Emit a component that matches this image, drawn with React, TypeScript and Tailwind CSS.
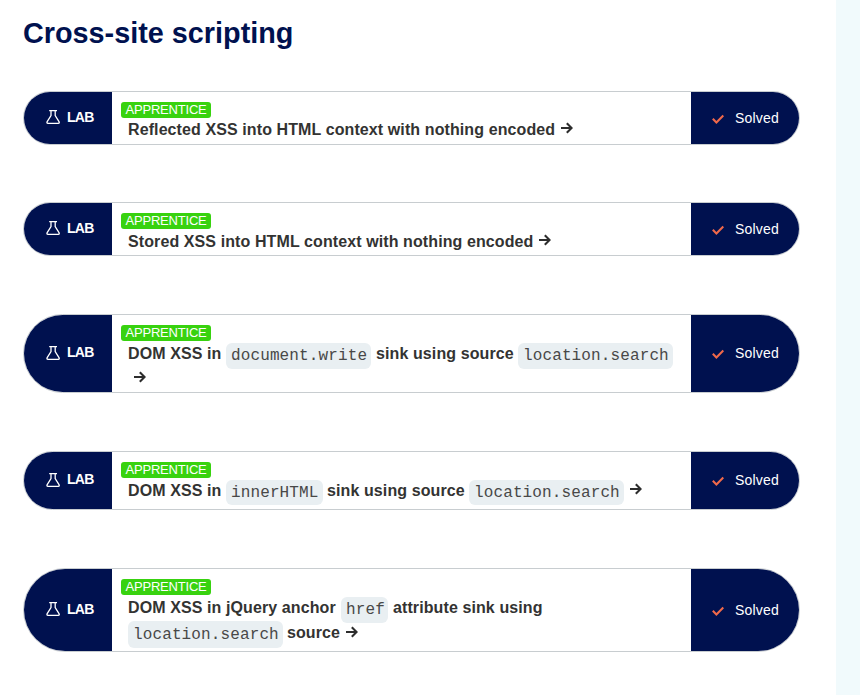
import React from "react";

function Arrow({ className }: { className: string }) {
  return (
    <svg className={"h-3 w-3 shrink-0 " + className} viewBox="0 0 12 12" fill="none" stroke="#2d2d2d" strokeWidth="2.1">
      <path d="M0 6H10.5M5.8 1.2L10.6 6L5.8 10.8" />
    </svg>
  );
}

function Flask() {
  return (
    <svg className="mt-px h-[14px] w-[14px] shrink-0" viewBox="0 0 14 14" fill="none" stroke="#fff" strokeWidth="1.3">
      <path d="M3.2 .7H11M5 .7V5.6L1.2 11.6Q.4 13.3 2 13.3H12.2Q13.8 13.3 13 11.6L9.2 5.6V.7" />
    </svg>
  );
}

function Check() {
  return (
    <svg className="mt-px h-[10px] w-3 shrink-0" viewBox="0 0 12 10" fill="none" stroke="#f0694a" strokeWidth="2.1">
      <path d="M.8 4.8L4.4 8.4L11.3 1.5" />
    </svg>
  );
}

function Code({ className, children }: { className: string; children: React.ReactNode }) {
  return (
    <code
      className={
        "block shrink-0 rounded-md bg-[#e9eff2] pl-[5px] font-['Liberation_Mono',monospace] text-base font-normal tracking-[0.12px] text-[#484848] " +
        className
      }
    >
      {children}
    </code>
  );
}

function Words({ className, children }: { className: string; children: React.ReactNode }) {
  return <span className={"block shrink-0 pt-px tracking-[0.1px] " + className}>{children}</span>;
}

function Line({ className = "", children }: { className?: string; children: React.ReactNode }) {
  return <div className={"flex items-start pl-4 leading-5 " + className}>{children}</div>;
}

function Lab({ className, children }: { className: string; children: React.ReactNode }) {
  return (
    <div className={"flex w-[777px] overflow-hidden rounded-[42px] border border-[#c8cdd0] bg-white " + className}>
      <div className="flex w-[88px] shrink-0 items-center bg-[#00114f] pb-[3px] pl-[22px] text-white">
        <Flask />
        <span className="ml-[7px] text-[14px] leading-5 font-bold tracking-[-0.7px]">LAB</span>
      </div>
      <div className="w-[579px] shrink-0 pt-[10px] text-base font-bold whitespace-nowrap text-[#333332]">
        <div className="ml-[9px] h-4 w-[90px] rounded-[3px] bg-[#38d20f] pl-[4.5px] text-[13px] leading-[15px] font-normal tracking-[-0.2px] text-white">
          APPRENTICE
        </div>
        {children}
      </div>
      <div className="flex w-[108px] shrink-0 items-center bg-[#00114f] pl-[21px] text-[14px] text-white">
        <Check />
        <span className="ml-[11px] tracking-[0.2px]">Solved</span>
      </div>
    </div>
  );
}

export default function App() {
  return (
    <div className="flex h-[695px] w-[860px] overflow-hidden bg-white font-['Liberation_Sans',Arial,sans-serif]">
      <main className="w-[836px] shrink-0 pl-[23px]">
        <h1 className="h-[91px] pt-[15px] text-[28.8px] leading-9 font-bold text-[#00114f]">Cross-site scripting</h1>
        <Lab className="h-[54px]">
          <Line className="mt-px">
            <Words className="w-[433px]">Reflected XSS into HTML context with nothing encoded</Words>
            <Arrow className="mt-[3px]" />
          </Line>
        </Lab>
        <Lab className="mt-[57px] h-[54px]">
          <Line className="mt-[2px]">
            <Words className="w-[411px]">Stored XSS into HTML context with nothing encoded</Words>
            <Arrow className="mt-[3px]" />
          </Line>
        </Lab>
        <Lab className="mt-[58px] h-[79px]">
          <Line className="mt-[2px] h-[26px]">
            <Words className="w-[98px]">DOM XSS in</Words>
            <Code className="w-[145px] leading-[26px]">document.write</Code>
            <Words className="ml-[5px] w-[142px]">sink using source</Words>
            <Code className="w-[155px] leading-[26px]">location.search</Code>
          </Line>
          <Line className="h-3">
            <Arrow className="mt-[2px] ml-[6px]" />
          </Line>
        </Lab>
        <Lab className="mt-[58px] h-[59px]">
          <Line className="mt-[2px]">
            <Words className="w-[98px]">DOM XSS in</Words>
            <Code className="h-[25px] w-[97px] leading-[26px]">innerHTML</Code>
            <Words className="ml-[4px] w-[142px]">sink using source</Words>
            <Code className="h-[25px] w-[155px] leading-[26px]">location.search</Code>
            <Arrow className="mt-[3px] ml-[6px]" />
          </Line>
        </Lab>
        <Lab className="mt-[58px] h-[84px]">
          <Line className="mt-[2px] h-6">
            <Words className="w-[213px]">DOM XSS in jQuery anchor</Words>
            <Code className="w-[47px] leading-[26px]">href</Code>
            <Words className="ml-[5px]">attribute sink using</Words>
          </Line>
          <Line>
            <Code className="h-[27px] w-[155px] leading-[28px]">location.search</Code>
            <Words className="mt-px ml-[4px] w-[59px]">source</Words>
            <Arrow className="mt-[5px]" />
          </Line>
        </Lab>
      </main>
      <aside className="grow bg-[#f1fafc]" />
    </div>
  );
}
